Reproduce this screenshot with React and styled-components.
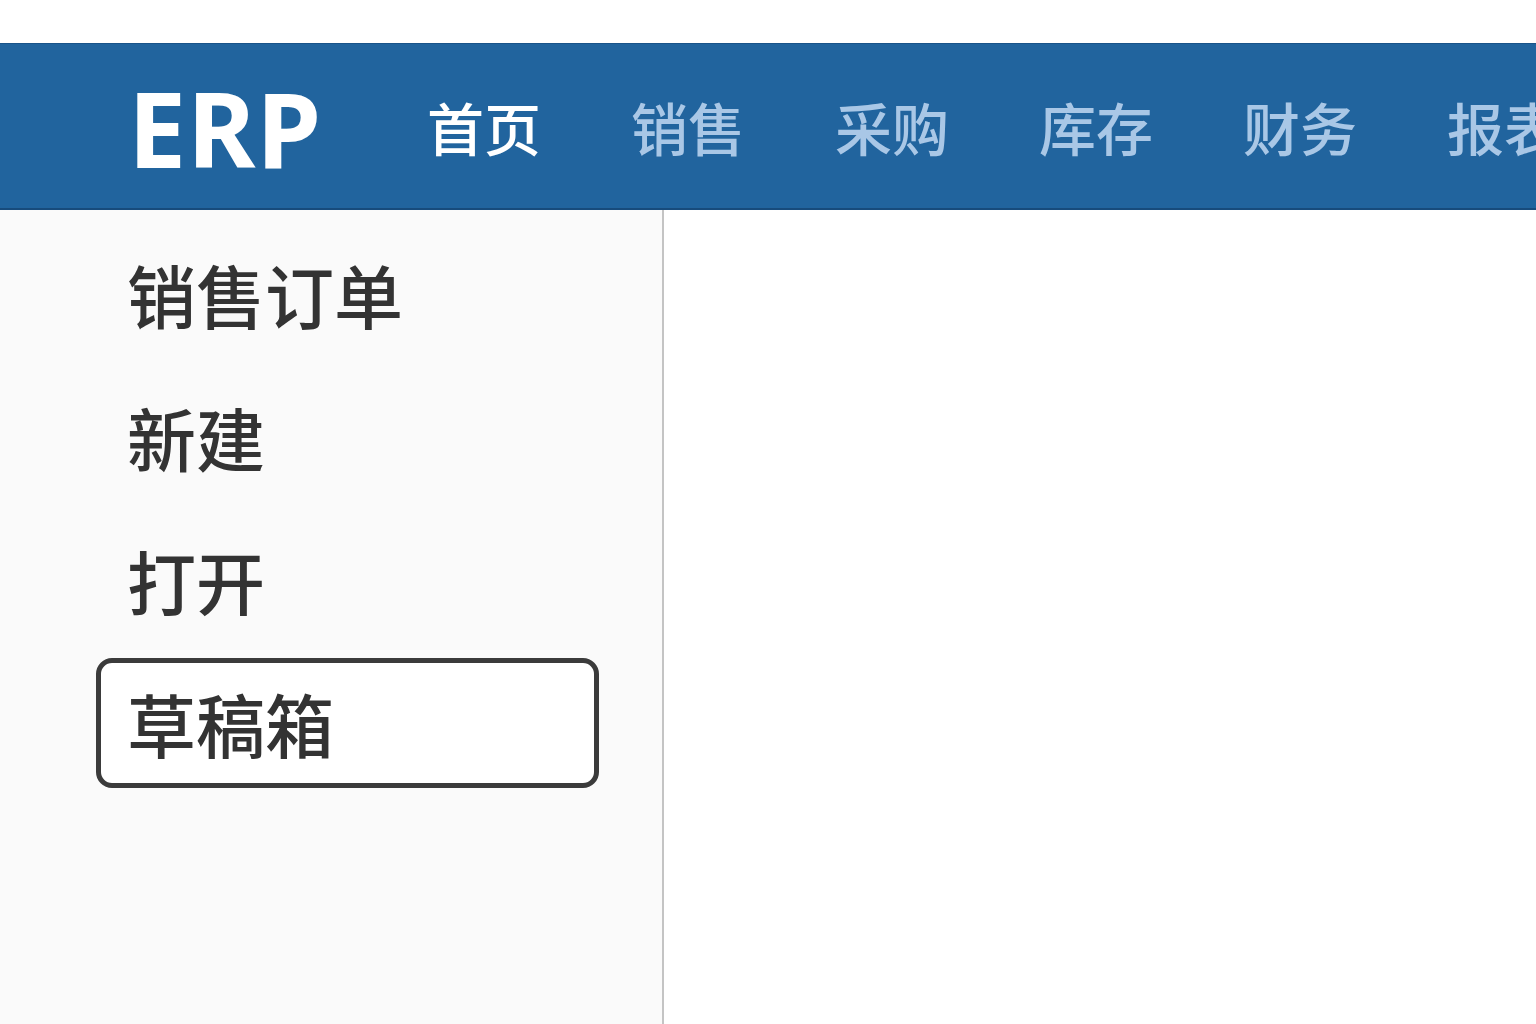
import styled, { createGlobalStyle } from "styled-components";

const GlobalStyle = createGlobalStyle`
  html, body {
    margin: 0;
    padding: 0;
    background: #ffffff;
  }
  body {
    font-family: "Noto Sans", "Noto Sans CJK SC", sans-serif;
  }
`;

const navItems = ["首页", "销售", "采购", "库存", "财务", "报表"];
const sideItems = ["销售订单", "新建", "打开", "草稿箱"];

const App = () => {
  return (
    <Page>
      <GlobalStyle />
      <Header>
        <Logo>ERP</Logo>
        <Nav>
          {navItems.map((item, i) => (
            <NavItem key={item} $active={i === 0}>{item}</NavItem>
          ))}
        </Nav>
      </Header>
      <Body>
        <Sidebar>
          {sideItems.map((item, i) => (
            <SideItem key={item} $selected={i === sideItems.length - 1}>{item}</SideItem>
          ))}
        </Sidebar>
        <Main />
      </Body>
    </Page>
  );
};

const Page = styled.div`
  display: flex;
  flex-direction: column;
  height: 100vh;
  padding-top: 43px;
  box-sizing: border-box;
  overflow: hidden;
`;

const Header = styled.header`
  flex: 0 0 auto;
  height: 167px;
  box-sizing: border-box;
  background: #21649e;
  border-top: 1px solid #1a5489;
  border-bottom: 2px solid #174b7c;
  display: flex;
  align-items: center;
  padding-left: 128px;
  white-space: nowrap;
  overflow: hidden;
`;

const Logo = styled.div`
  font-family: "Noto Sans", sans-serif;
  font-weight: 700;
  font-size: 104px;
  line-height: 1;
  color: #ffffff;
  letter-spacing: 1px;
  margin-right: 105px;
  margin-top: 4px;
`;

const Nav = styled.nav`
  display: flex;
  gap: 90px;
`;

const NavItem = styled.a`
  font-family: "Noto Sans CJK SC", sans-serif;
  font-size: 57px;
  font-weight: 500;
  line-height: 1;
  color: ${(p) => (p.$active ? "#ffffff" : "#a9c7e6")};
  cursor: pointer;
`;

const Body = styled.div`
  flex: 1;
  display: flex;
  min-height: 0;
`;

const Sidebar = styled.aside`
  width: 664px;
  flex: 0 0 auto;
  background: #fafafa;
  border-right: 2px solid #c4c4c4;
  padding: 19px 0 0 96px;
  display: flex;
  flex-direction: column;
  gap: 13px;
  box-sizing: border-box;
`;

const SideItem = styled.div`
  width: 503px;
  height: 130px;
  box-sizing: border-box;
  display: flex;
  align-items: center;
  padding-left: 26px;
  border: 5px solid ${(p) => (p.$selected ? "#3b3b3b" : "transparent")};
  border-radius: 16px;
  background: ${(p) => (p.$selected ? "#ffffff" : "transparent")};
  font-family: "Noto Sans CJK SC", sans-serif;
  font-size: 69px;
  font-weight: 500;
  color: #333333;
  line-height: 1;
  cursor: pointer;
`;

const Main = styled.main`
  flex: 1;
  background: #ffffff;
`;

export default App;
